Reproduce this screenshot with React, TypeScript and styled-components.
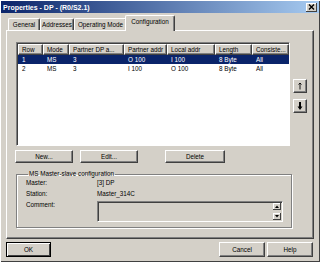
import styled, { createGlobalStyle } from "styled-components";

const GlobalStyle = createGlobalStyle`
  html, body {
    margin: 0;
    padding: 0;
    background: #d4d0c8;
  }
  body {
    font-family: "Liberation Sans", Arial, sans-serif;
    font-size: 6.3px;
    color: #000;
  }
  * {
    box-sizing: border-box;
  }
`;

const Window = styled.div`
  width: 320px;
  height: 262px;
  background: #d4d0c8;
  display: flex;
  flex-direction: column;
  overflow: hidden;
  box-shadow: inset 1px 1px #ffffff, inset -1px -1px #404040;
`;

const TitleBar = styled.div`
  margin: 1px 1px 0 1px;
  height: 12px;
  display: flex;
  align-items: center;
  padding: 0 2px;
  background: linear-gradient(to right, #0a246a, #a6caf0);
  color: #fff;
  font-weight: bold;
  font-size: 7px;
`;

const TitleText = styled.span`
  flex: 1;
`;

const CloseBtn = styled.div`
  width: 11px;
  height: 9px;
  background: #d4d0c8;
  box-shadow: inset -1px -1px #404040, inset 1px 1px #ffffff;
  display: flex;
  align-items: center;
  justify-content: center;
`;

const TabStrip = styled.div`
  height: 17px;
  display: flex;
  align-items: flex-end;
  padding-left: 8px;
  position: relative;
  z-index: 1;
`;

const Tab = styled.div<{ $active?: boolean; $w: number }>`
  width: ${(p) => p.$w}px;
  height: ${(p) => (p.$active ? 16 : 12)}px;
  margin: 0 ${(p) => (p.$active ? -2 : 0)}px ${(p) => (p.$active ? -1 : 0)}px
    ${(p) => (p.$active ? -2 : 0)}px;
  border-top: 1px solid #ffffff;
  border-left: 1px solid #ffffff;
  border-right: 1px solid #404040;
  border-radius: 2px 2px 0 0;
  box-shadow: inset -1px 0 #808080;
  background: #d4d0c8;
  display: flex;
  justify-content: center;
  padding-top: 2px;
  white-space: nowrap;
  position: relative;
  z-index: ${(p) => (p.$active ? 2 : 1)};
`;

const Panel = styled.div`
  margin-left: 6px;
  width: 308px;
  height: 209px;
  border-top: 1px solid #ffffff;
  border-left: 1px solid #ffffff;
  border-right: 1px solid #404040;
  border-bottom: 1px solid #404040;
  box-shadow: inset -1px -1px #808080;
  padding: 11px 0 0 9px;
  display: flex;
  flex-direction: column;
`;

const ListRow = styled.div`
  display: flex;
`;

const List = styled.div`
  width: 274px;
  height: 104px;
  background: #ffffff;
  border-top: 1px solid #808080;
  border-left: 1px solid #808080;
  border-right: 1px solid #ffffff;
  border-bottom: 1px solid #ffffff;
  box-shadow: inset 1px 1px #404040;
  padding: 1px 0 0 1px;
`;

const cols = [25, 26, 55, 43, 48, 37, 37];

const HeaderRow = styled.div`
  display: flex;
  height: 11px;
`;

const HeaderCell = styled.div<{ $w: number }>`
  width: ${(p) => p.$w}px;
  background: #d4d0c8;
  border-top: 1px solid #ffffff;
  border-left: 1px solid #ffffff;
  border-right: 1px solid #404040;
  border-bottom: 1px solid #404040;
  box-shadow: inset -1px -1px #808080;
  padding: 1px 0 0 3px;
  white-space: nowrap;
  overflow: hidden;
`;

const DataRow = styled.div<{ $selected?: boolean }>`
  display: flex;
  height: 9px;
  align-items: center;
  background: ${(p) => (p.$selected ? "#0a246a" : "transparent")};
  color: ${(p) => (p.$selected ? "#ffffff" : "#000000")};
`;

const DataCell = styled.div<{ $w: number }>`
  width: ${(p) => p.$w}px;
  padding-left: 4px;
  white-space: nowrap;
`;

const ArrowCol = styled.div`
  margin-left: 3px;
  padding-top: 37px;
  display: flex;
  flex-direction: column;
  gap: 6px;
`;

const Button = styled.div<{ $w: number; $default?: boolean }>`
  width: ${(p) => p.$w}px;
  height: 100%;
  background: #d4d0c8;
  display: flex;
  align-items: center;
  justify-content: center;
  border: 1px solid;
  border-color: ${(p) =>
    p.$default ? "#000000" : "#ffffff #404040 #404040 #ffffff"};
  box-shadow: ${(p) =>
    p.$default
      ? "inset 1px 1px #ffffff, inset -1px -1px #404040"
      : "inset -1px -1px #808080"};
`;

const SquareButton = styled(Button)`
  height: 14px;
`;

const ButtonRow = styled.div`
  display: flex;
  height: 13px;
  margin: 4px 0 0 -1px;
  gap: 7px;
`;

const ButtonGap = styled.div`
  width: 13px;
`;

const GroupBox = styled.fieldset`
  margin: 7px 0 0 0;
  padding: 0 0 4px 9px;
  width: 276px;
  height: 58px;
  border: 1px solid #808080;
  box-shadow: 1px 1px #ffffff, inset 1px 1px #ffffff;
  min-width: 0;
`;

const Legend = styled.legend`
  padding: 0 1px;
  margin-left: 2px;
  line-height: 8px;
`;

const FieldGrid = styled.div`
  display: grid;
  grid-template-columns: 71px 186px;
  grid-auto-rows: 9px;
  row-gap: 2px;
  line-height: 9px;
`;

const CommentBox = styled.div`
  margin-top: 1px;
  width: 186px;
  height: 21px;
  border-top: 1px solid #808080;
  border-left: 1px solid #808080;
  border-right: 1px solid #ffffff;
  border-bottom: 1px solid #ffffff;
  box-shadow: inset 1px 1px #404040;
  display: flex;
  flex-direction: column;
  align-items: flex-end;
  justify-content: space-between;
  padding: 1px 1px 1px 0;
`;

const MiniScroll = styled.div`
  width: 8px;
  height: 7px;
  background: #d4d0c8;
  box-shadow: inset -1px -1px #404040, inset 1px 1px #ffffff;
  display: flex;
  align-items: center;
  justify-content: center;
`;

const Footer = styled.div`
  margin-top: 3px;
  height: 15px;
  display: flex;
  padding: 0 7px 0 6px;
  gap: 2px;
`;

const Spacer = styled.div`
  flex: 1;
`;

const headers = ["Row", "Mode", "Partner DP a...", "Partner addr", "Local addr", "Length", "Consiste..."];
const rows = [
  ["1", "MS", "3", "O 100", "I 100", "8 Byte", "All"],
  ["2", "MS", "3", "I 100", "O 100", "8 Byte", "All"],
];

const tabs = [
  { label: "General", w: 32 },
  { label: "Addresses", w: 34 },
  { label: "Operating Mode", w: 53 },
  { label: "Configuration", w: 50, active: true },
];

export default function App() {
  return (
    <>
      <GlobalStyle />
      <Window>
        <TitleBar>
          <TitleText>Properties - DP - (R0/S2.1)</TitleText>
          <CloseBtn>
            <svg width="7" height="6" viewBox="0 0 7 6">
              <path d="M1 0.5 L6 5.5 M6 0.5 L1 5.5" stroke="#000" strokeWidth="1.4" />
            </svg>
          </CloseBtn>
        </TitleBar>
        <TabStrip>
          {tabs.map((t) => (
            <Tab key={t.label} $w={t.w} $active={t.active}>
              {t.label}
            </Tab>
          ))}
        </TabStrip>
        <Panel>
          <ListRow>
            <List>
              <HeaderRow>
                {headers.map((h, i) => (
                  <HeaderCell key={h} $w={cols[i]}>
                    {h}
                  </HeaderCell>
                ))}
              </HeaderRow>
              {rows.map((r, ri) => (
                <DataRow key={ri} $selected={ri === 0}>
                  {r.map((c, i) => (
                    <DataCell key={i} $w={cols[i]}>
                      {c}
                    </DataCell>
                  ))}
                </DataRow>
              ))}
            </List>
            <ArrowCol>
              <SquareButton $w={14}>
                <svg width="6" height="8" viewBox="0 0 6 8">
                  <path d="M3 7.5 V1 M1.5 2.5 L3 1 L4.5 2.5" stroke="#000" strokeWidth="0.9" fill="none" />
                </svg>
              </SquareButton>
              <SquareButton $w={14}>
                <svg width="6" height="8" viewBox="0 0 6 8">
                  <path d="M2 0 H4 V4.5 H5.5 L3 8 L0.5 4.5 H2 Z" fill="#000" />
                </svg>
              </SquareButton>
            </ArrowCol>
          </ListRow>
          <ButtonRow>
            <Button $w={58}>New...</Button>
            <Button $w={58}>Edit...</Button>
            <ButtonGap />
            <Button $w={60}>Delete</Button>
          </ButtonRow>
          <GroupBox>
            <Legend>MS Master-slave configuration</Legend>
            <FieldGrid>
              <span>Master:</span>
              <span>[3] DP</span>
              <span>Station:</span>
              <span>Master_314C</span>
              <span>Comment:</span>
              <CommentBox>
                <MiniScroll>
                  <svg width="4" height="3" viewBox="0 0 4 3">
                    <path d="M0 3 L2 0.5 L4 3 Z" fill="#000" />
                  </svg>
                </MiniScroll>
                <MiniScroll>
                  <svg width="4" height="3" viewBox="0 0 4 3">
                    <path d="M0 0 L2 2.5 L4 0 Z" fill="#000" />
                  </svg>
                </MiniScroll>
              </CommentBox>
            </FieldGrid>
          </GroupBox>
        </Panel>
        <Footer>
          <Button $w={45} $default>
            OK
          </Button>
          <Spacer />
          <Button $w={46}>Cancel</Button>
          <Button $w={46}>Help</Button>
        </Footer>
      </Window>
    </>
  );
}
